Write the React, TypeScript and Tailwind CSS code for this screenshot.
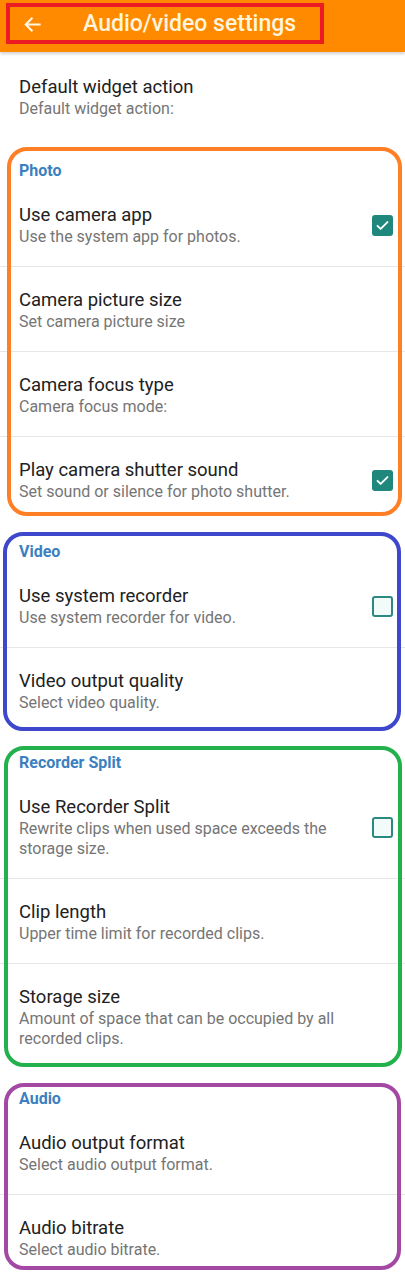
import React from "react";

type Row = { title: string; sub: string; check?: "on" | "off" };

function Checkbox({ on }: { on: boolean }) {
  if (on) {
    return (
      <div className="w-[21px] h-[21px] rounded-[3px] bg-[#1f877c] flex items-center justify-center shrink-0">
        <svg width="15" height="15" viewBox="0 0 24 24" fill="none">
          <path d="M4 12.5l5 5L20 6.5" stroke="#ffffff" strokeWidth="3" strokeLinecap="round" strokeLinejoin="round" />
        </svg>
      </div>
    );
  }
  return <div className="w-[21px] h-[21px] rounded-[3px] border-2 border-[#2b8a80] bg-[#f3fbfa] shrink-0" />;
}

function Pref({ row, divider }: { row: Row; divider: boolean }) {
  return (
    <div className={"flex items-center pl-[19px] pr-[12px] pt-[21px] pb-[19px] " + (divider ? "border-b border-[#e6e6e6]" : "")}>
      <div className="flex-1 min-w-0 pr-[8px]">
        <div className="text-[18.5px] leading-[24px] text-[#212121]">{row.title}</div>
        <div className="text-[16px] leading-[20px] text-[#757575]">{row.sub}</div>
      </div>
      {row.check && <Checkbox on={row.check === "on"} />}
    </div>
  );
}

function Section({
  label,
  rows,
  box,
}: {
  label: string;
  rows: Row[];
  box: string;
}) {
  return (
    <div className="relative">
      <div className="pl-[19px] pt-[21px] pb-[1px] h-[42px]">
        <div className="text-[16px] leading-[20px] font-bold text-[#3b7fc0]">{label}</div>
      </div>
      {rows.map((r, i) => (
        <Pref key={r.title} row={r} divider={i < rows.length - 1} />
      ))}
      <div className={"absolute pointer-events-none border-[4px] rounded-[20px] " + box} />
    </div>
  );
}

export default function App() {
  return (
    <div className="w-[405px] min-h-[1280px] bg-white overflow-hidden" style={{ fontFamily: "Roboto, 'Noto Sans', sans-serif" }}>
      <div className="relative h-[52px] bg-[#ff8a00] shadow-[0_2px_3px_rgba(0,0,0,0.18)] flex items-center z-10">
        <svg className="ml-[23px] -mt-[4px]" width="19" height="19" viewBox="0 0 24 24" fill="none">
          <path d="M21 12H4M11 4.5L3.5 12 11 19.5" stroke="#fff6e6" strokeWidth="2.6" strokeLinecap="square" />
        </svg>
        <div className="ml-[41px] text-[23px] font-medium text-[#fff4dc] leading-[26px] -mt-[4px]">Audio/video settings</div>
        <div className="absolute left-[6px] top-[3px] w-[318px] h-[41px] border-[4px] border-[#ed1c24]" />
      </div>

      <div className="pl-[19px] pt-[23px] pb-[21px]">
        <div className="text-[18.5px] leading-[24px] text-[#212121]">Default widget action</div>
        <div className="text-[16px] leading-[20px] text-[#757575]">Default widget action:</div>
      </div>

      <Section
        label="Photo"
        box="top-[7px] bottom-[5px] left-[7px] right-[3px] border-[#ff7f27]"
        rows={[
          { title: "Use camera app", sub: "Use the system app for photos.", check: "on" },
          { title: "Camera picture size", sub: "Set camera picture size" },
          { title: "Camera focus type", sub: "Camera focus mode:" },
          { title: "Play camera shutter sound", sub: "Set sound or silence for photo shutter.", check: "on" },
        ]}
      />
      <Section
        label="Video"
        box="top-[11px] bottom-[1px] left-[3px] right-[4px] border-[#3f48cc]"
        rows={[
          { title: "Use system recorder", sub: "Use system recorder for video.", check: "off" },
          { title: "Video output quality", sub: "Select video quality." },
        ]}
      />
      <Section
        label="Recorder Split"
        box="top-[14px] bottom-[1px] left-[4px] right-[3px] border-[#22b14c]"
        rows={[
          { title: "Use Recorder Split", sub: "Rewrite clips when used space exceeds the storage size.", check: "off" },
          { title: "Clip length", sub: "Upper time limit for recorded clips." },
          { title: "Storage size", sub: "Amount of space that can be occupied by all recorded clips." },
        ]}
      />
      <Section
        label="Audio"
        box="top-[15px] bottom-[9px] left-[4px] right-[4px] border-[#a349a4]"
        rows={[
          { title: "Audio output format", sub: "Select audio output format." },
          { title: "Audio bitrate", sub: "Select audio bitrate." },
        ]}
      />
    </div>
  );
}
